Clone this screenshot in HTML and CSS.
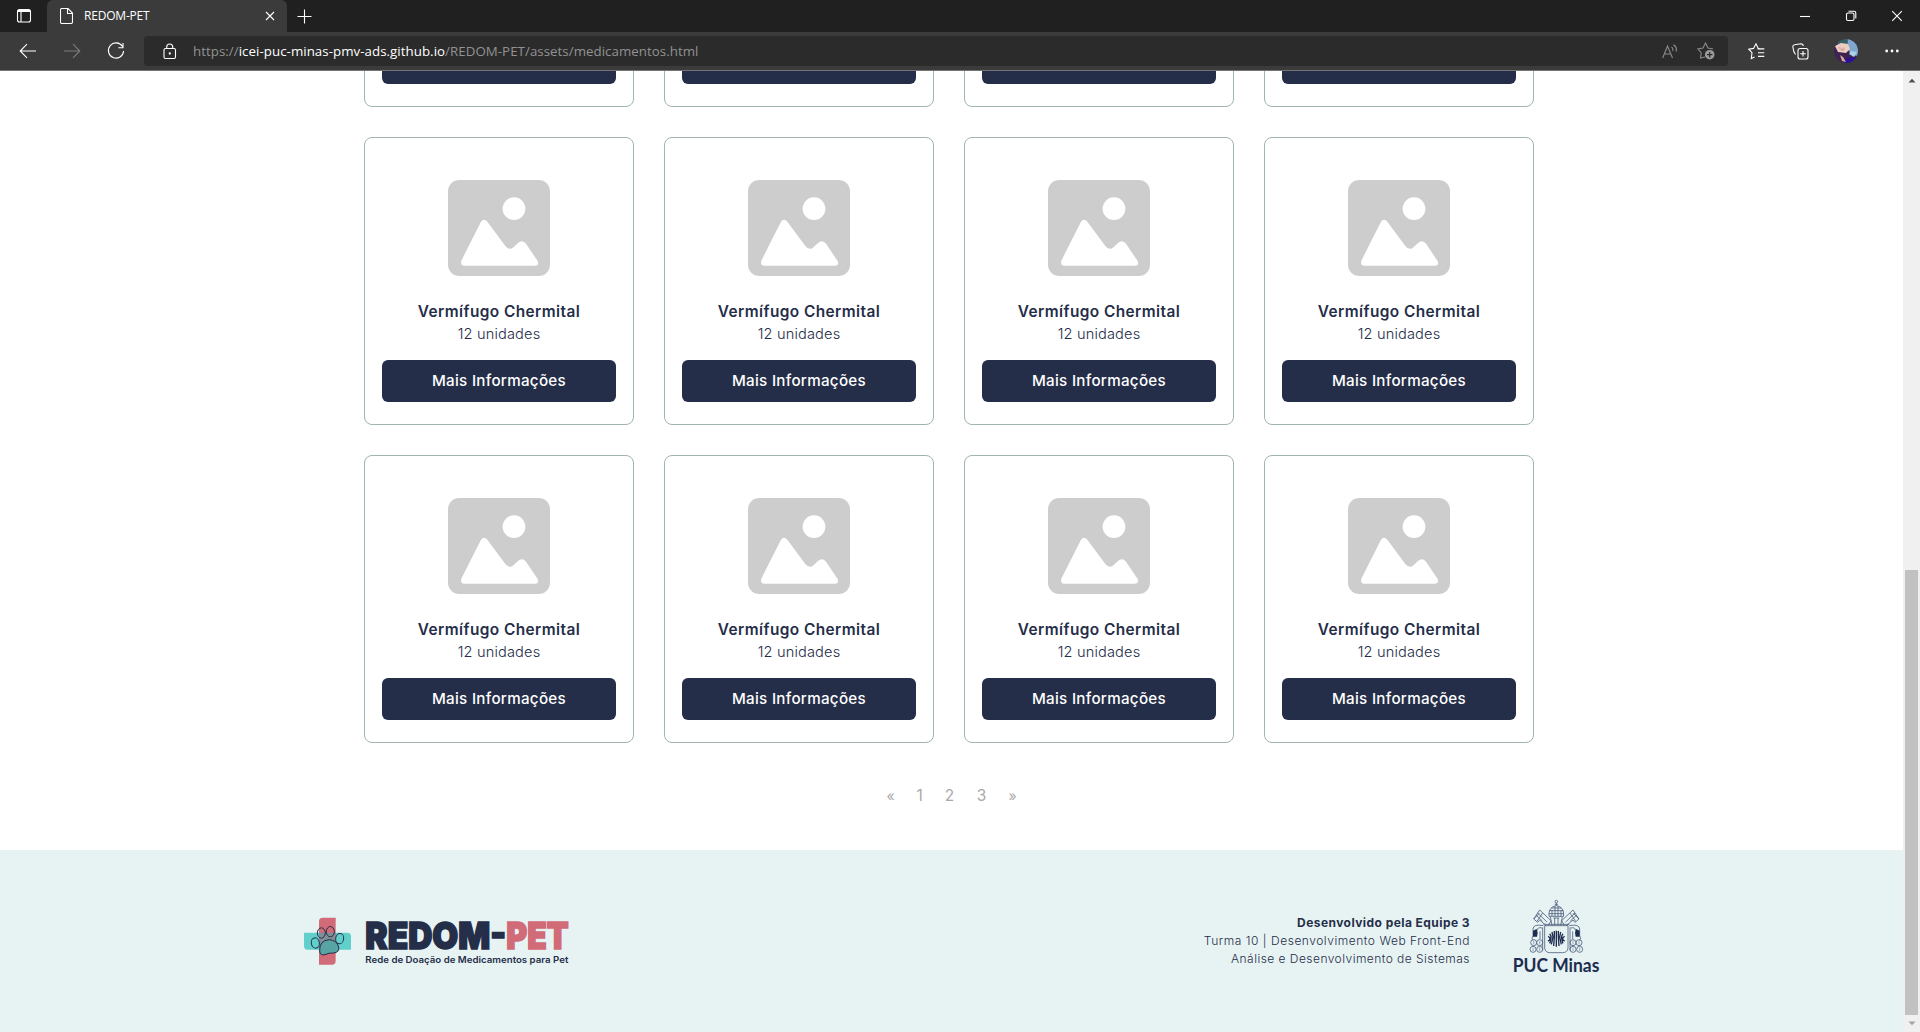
FILE: index.html
```html
<!DOCTYPE html>
<html lang="pt-BR">
<head>
<meta charset="utf-8">
<title>REDOM-PET</title>
<link rel="stylesheet" href="styles.css">
</head>
<body>
<svg class="defs" aria-hidden="true">
  <symbol id="placeholder" viewBox="0 0 306 288">
    <rect width="306" height="288" rx="34" fill="#cdcdcd"/>
    <circle cx="198" cy="86" r="34" fill="#fff"/>
    <path d="M99 125Q108 113 118 125L172 198Q185 214 198 200L211 188Q222 178 233 190L269 243Q274 257 260 257H50Q36 257 40 242Z" fill="#fff"/>
  </symbol>
</svg>

<header class="browser">
  <div class="tabs">
    <svg class="tab-menu" viewBox="0 0 16 16"><rect x="1.5" y="1.5" width="13" height="12.5" rx="2"/><path d="M2 3.5h12M2 2.5h12M5 4v10"/></svg>
    <div class="tab">
      <svg class="doc" viewBox="0 0 13 16"><path d="M2 .5h6l4.500 4.500v9q0 1.500-1.500 1.500H2Q.5 15.500.5 14V2Q.5.5 2 .5ZM7.500.5V5.500h5"/></svg>
      <span class="tab-title">REDOM-PET</span>
      <svg class="tab-close" viewBox="0 0 10 10"><path d="M1 1l8 8M9 1L1 9"/></svg>
    </div>
    <svg class="new-tab" viewBox="0 0 15 15"><path d="M7.500.5v14M.5 7.500h14"/></svg>
    <div class="window-buttons">
      <svg viewBox="0 0 12 12"><path d="M1 6.500h10"/></svg>
      <svg viewBox="0 0 12 12"><rect x="1.500" y="3" width="7.500" height="7.500" rx="1.500"/><path d="M3.500 1.200H9q1.800 0 1.800 1.800v5.500"/></svg>
      <svg viewBox="0 0 12 12"><path d="M1.200 1.200l9.600 9.600M10.800 1.200L1.200 10.800"/></svg>
    </div>
  </div>
  <div class="toolbar">
    <svg class="back" viewBox="0 0 18 16"><path d="M17 8H1.500M8 1.200L1.200 8 8 14.800"/></svg>
    <svg class="forward" viewBox="0 0 18 16"><path d="M1 8h15.500M10 1.200L16.800 8 10 14.800"/></svg>
    <svg class="reload" viewBox="0 0 18 18"><path d="M15.500 4.500A7.600 7.600 0 1 0 16.600 9M16 1v4.700h-4.700"/></svg>
    <div class="address">
      <svg class="lock" viewBox="0 0 14 17"><rect x="1" y="5.500" width="11.500" height="10" rx="1.500"/><path d="M3.700 5.500V4a3 3 0 0 1 6 0v1.500"/><circle cx="6.800" cy="10.500" r=".6"/></svg>
      <p class="url"><span class="scheme">https://</span><span class="host">icei-puc-minas-pmv-ads.github.io</span><span class="path">/REDOM-PET/assets/medicamentos.html</span></p>
      <svg class="read" viewBox="0 0 16 15"><path d="M.7 14L5.500 2l5 12M2.200 10h6.600M9.500 3q2 1.500 1.200 4M11.500.7q4 2.500 2.600 7"/></svg>
      <svg class="add-star" viewBox="0 0 18 18"><path d="M8 15L3.500 16l.7-5.300L1 7l5-.9L8.500 1 11 6l5 1"/><circle class="disc" cx="12.700" cy="12.700" r="4.800"/><path class="plus" d="M12.700 10v5.400M10 12.700h5.400"/></svg>
    </div>
    <svg class="favorites" viewBox="0 0 17 17"><path d="M12 5.700L10.300 5.400 8 .8 5.500 5.400.8 6.200 4 9.700l-.7 5.800L6.500 14M9.500 5.900h6.800M10 9.700h6.300M10 13.400h6.300"/></svg>
    <svg class="collections" viewBox="0 0 17 17"><rect x="6" y="5.500" width="10" height="10.500" rx="2"/><path d="M11 8v5.500M8.200 10.700h5.600M3.500 11.500Q1.500 9 .8 4 .7 2 2.500 1.700L9 .7q2 0 2.300 2.300"/></svg>
    <svg class="avatar" viewBox="0 0 24 24">
      <clipPath id="face"><circle cx="12" cy="12" r="12"/></clipPath>
      <g clip-path="url(#face)">
        <rect width="24" height="24" fill="#3e2350"/>
        <path d="M13 0h11v17l-7-1-3-6Z" fill="#7fa7cd"/>
        <path d="M3 0h11l-1 5-9 3Z" fill="#376062"/>
        <path d="M1 7l6-3 7 1 2 5-4 4-8-1Z" fill="#edcfc2"/>
        <path d="M4 9l2-2 1 3 3-2 1 3-3 1Z" fill="#dcaaa6"/>
        <path d="M11 20l7-2 5 1-4 5h-8Z" fill="#2b1299"/>
        <path d="M6 16l3 2 3 5-4-1Z" fill="#d6a7a0"/>
        <path d="M17 12l6 1-3 5-5-3Z" fill="#a6d3e8"/>
      </g>
    </svg>
    <svg class="more" viewBox="0 0 14 4"><circle cx="1.700" cy="2" r="1.400"/><circle cx="7" cy="2" r="1.400"/><circle cx="12.300" cy="2" r="1.400"/></svg>
  </div>
</header>

<div class="viewport">
  <div class="page">
    <main class="cards">
      <article class="card"><a class="button">Mais Informações</a></article>
      <article class="card"><a class="button">Mais Informações</a></article>
      <article class="card"><a class="button">Mais Informações</a></article>
      <article class="card"><a class="button">Mais Informações</a></article>
      <article class="card"><svg class="photo"><use href="#placeholder"/></svg><h2>Vermífugo Chermital</h2><p>12 unidades</p><a class="button">Mais Informações</a></article>
      <article class="card"><svg class="photo"><use href="#placeholder"/></svg><h2>Vermífugo Chermital</h2><p>12 unidades</p><a class="button">Mais Informações</a></article>
      <article class="card"><svg class="photo"><use href="#placeholder"/></svg><h2>Vermífugo Chermital</h2><p>12 unidades</p><a class="button">Mais Informações</a></article>
      <article class="card"><svg class="photo"><use href="#placeholder"/></svg><h2>Vermífugo Chermital</h2><p>12 unidades</p><a class="button">Mais Informações</a></article>
      <article class="card"><svg class="photo"><use href="#placeholder"/></svg><h2>Vermífugo Chermital</h2><p>12 unidades</p><a class="button">Mais Informações</a></article>
      <article class="card"><svg class="photo"><use href="#placeholder"/></svg><h2>Vermífugo Chermital</h2><p>12 unidades</p><a class="button">Mais Informações</a></article>
      <article class="card"><svg class="photo"><use href="#placeholder"/></svg><h2>Vermífugo Chermital</h2><p>12 unidades</p><a class="button">Mais Informações</a></article>
      <article class="card"><svg class="photo"><use href="#placeholder"/></svg><h2>Vermífugo Chermital</h2><p>12 unidades</p><a class="button">Mais Informações</a></article>
    </main>
    <nav class="pagination"><a class="arrow">«</a><a class="one">1</a><a>2</a><a>3</a><a class="arrow">»</a></nav>
    <footer class="footer">
      <svg class="logo" viewBox="42 79 810 150">
        <path d="M42 129H172Q183 129 183 140V180H53Q42 180 42 169Z" fill="#62d0ca"/>
        <path d="M98 84H137V214Q137 225 126 225H87V95Q87 84 98 84Z" fill="#d16b78"/>
        <path d="M87 129h50v51H87Z" fill="#7f8f97"/>
        <path d="M90 170Q92 151 118 150 141 152 146 172 149 188 131 190 116 189 105 195 90 199 89 185Z" fill="#58a3a4"/>
        <g fill="none" stroke="#252e49" stroke-width="3">
          <ellipse cx="76" cy="160" rx="12" ry="15.500" transform="rotate(-12 76 160)"/>
          <ellipse cx="94" cy="130" rx="12" ry="15.500"/>
          <ellipse cx="121" cy="126" rx="12" ry="15.500"/>
          <ellipse cx="149" cy="147" rx="12" ry="15.500" transform="rotate(8 149 147)"/>
          <path d="M89 184Q88 152 118 150 141 152 146 172 149 188 131 190 116 189 105 195 90 199 89 184Z"/>
        </g>
        <g class="wordmark">
          <text x="226" y="178" textLength="422" lengthAdjust="spacingAndGlyphs" fill="#252e49" stroke="#252e49">REDOM-</text>
          <text x="649" y="178" textLength="187" lengthAdjust="spacingAndGlyphs" fill="#d16b78" stroke="#d16b78">PET</text>
        </g>
        <text class="tagline" x="226" y="219" textLength="609" lengthAdjust="spacingAndGlyphs">Rede de Doação de Medicamentos para Pet</text>
      </svg>
      <div class="credits"><strong>Desenvolvido pela Equipe 3</strong><span class="class">Turma 10 | Desenvolvimento Web Front-End</span><span class="course">Análise e Desenvolvimento de Sistemas</span></div>
      <svg class="puc" viewBox="30 18 279 270">
        <g fill="none" stroke="#4a5b7a" stroke-width="2.400">
          <circle cx="169" cy="35" r="4"/><path d="M169 39v8M164 43h10"/>
          <path d="M147 79Q145 50 169 47 193 50 191 79ZM146 71h46M148 62h42M154 54h30M156 79V60M165 79V49M174 79V49M183 79V60"/>
          <path d="M151 80l5 26M187 80l-5 26M160 84h18M164 84v22M174 84v22"/>
          <path d="M119 60l34 32-8 14M119 60l-6 9-12 18 12 10 6-7 20 17M113 69l28 27M109 76l18 17M128 69l-17 25M101 87l17-17"/>
          <path d="M219 60l-34 32 8 14M219 60l6 9 12 18-12 10-6-7-20 17M225 69l-28 27M229 76l-18 17M210 69l17 25M237 87l-17-17"/>
          <path d="M134 107H204V174Q203 188 187 188H151Q135 188 134 174Z"/><path d="M130 103H208"/>
          <path d="M130 107q-30-6-31 10v19q-6 10 0 15M126 114q-14-4-15 8M120 124v23M128 112v70M208 107q30-6 31 10v19q6 10 0 15M212 114q14-4 15 8M218 124v23M210 112v70"/>
          <circle cx="101" cy="158" r="9"/><circle cx="119" cy="158" r="9"/><circle cx="99" cy="178" r="9"/><circle cx="119" cy="178" r="9"/>
          <circle cx="237" cy="158" r="9"/><circle cx="219" cy="158" r="9"/><circle cx="239" cy="178" r="9"/><circle cx="219" cy="178" r="9"/>
          <path d="M101 153v10M119 153v10M99 173v10M119 173v10M237 153v10M219 153v10M239 173v10M219 173v10" stroke-width="1.500"/>
        </g>
        <path d="M99 122l11-5 3 11-2 12H99ZM239 122l-11-5-3 11 2 12h12Z" fill="#1d2c50"/>
        <g fill="none" stroke="#1d2c50" stroke-width="4">
          <path d="M169 122v48M163 123v17l-2 28M175 123v17l2 28M156 126l3 15-5 22M182 126l-3 15 5 22"/>
          <path d="M149 131q5 5 4 14-1 9-4 15M189 131q-5 5-4 14 1 9 4 15M144 139q6 2 6 7 0 5-6 7M194 139q-6 2-6 7 0 5 6 7"/>
        </g>
        <text x="38" y="246" textLength="260" lengthAdjust="spacingAndGlyphs">PUC Minas</text>
      </svg>
    </footer>
  </div>
  <div class="scrollbar">
    <svg viewBox="0 0 8 5"><path d="M.5 4.500L4 .7l3.500 3.800Z" fill="#505050"/></svg>
    <div class="thumb"></div>
    <svg viewBox="0 0 8 5"><path d="M.5.5L4 4.300 7.500.5Z" fill="#a3a3a3"/></svg>
  </div>
</div>
</body>
</html>
```

FILE: styles.css
```css
* { box-sizing: border-box; }
body {
  margin: 0;
  height: 1032px;
  display: flex;
  flex-direction: column;
  overflow: hidden;
  background: #fff;
  font-family: Inter, "Open Sans", sans-serif;
}
svg { display: block; flex: none; }
.defs { width: 0; height: 0; position: absolute; }
h2, p { margin: 0; }

/* Browser frame */
.browser { height: 71px; flex: none; border-bottom: 1px solid #747474; background: #3b3b3b; }
.browser svg { fill: none; stroke: #fff; stroke-width: 1.1; }
.tabs { height: 32px; display: flex; align-items: center; background: #202020; }
.tab-menu { width: 16px; height: 16px; margin: 0 15px 0 16px; }
.tab {
  width: 240px; height: 32px; padding: 0 12px 0 13px;
  display: flex; align-items: center;
  background: #3b3b3b; border-radius: 6px 6px 0 0;
}
.doc { width: 13px; height: 16px; }
.tab-title { margin-left: 11px; flex: 1; color: #fff; font: 12px/16px "Open Sans", sans-serif; letter-spacing: -.2px; }
.tab-close { width: 10px; height: 10px; }
.new-tab { width: 15px; height: 15px; margin-left: 10px; }
.window-buttons { margin-left: auto; margin-right: 17px; display: flex; gap: 34px; }
.window-buttons svg { width: 12px; height: 12px; }
.toolbar { height: 38px; display: flex; align-items: center; }
.back { width: 18px; height: 16px; margin-left: 19px; }
.forward { width: 18px; height: 16px; margin-left: 26px; }
.toolbar .forward { stroke: #7c7c7c; }
.reload { width: 18px; height: 18px; margin-left: 26px; }
.address {
  width: 1584px; height: 30px; margin-left: 19px; padding: 0 13px 0 19px;
  display: flex; align-items: center;
  background: #2b2b2b; border-radius: 4px;
}
.lock { width: 14px; height: 17px; }
.url { margin-left: 16px; flex: 1; font: 13.3px/20px "Open Sans", sans-serif; letter-spacing: .045px; color: #929292; white-space: nowrap; }
.host { color: #fff; }
.address .read, .address .add-star { stroke: #8a8a8a; }
.read { width: 16px; height: 15px; margin-right: 19px; }
.add-star { width: 18px; height: 18px; }
.browser .disc { fill: #9a9a9a; stroke: none; }
.browser .plus { stroke: #2b2b2b; stroke-width: 1.2; }
.favorites { width: 17px; height: 17px; margin-left: 20px; }
.collections { width: 17px; height: 17px; margin-left: 27px; }
.browser .avatar { width: 24px; height: 24px; margin-left: 25px; stroke: none; }
.browser .more { width: 14px; height: 4px; margin-left: 27px; fill: #fff; stroke: none; }

/* Scrolled page */
.viewport { flex: 1; min-height: 0; display: flex; overflow: hidden; }
.page { width: 1903px; display: flex; flex-direction: column; justify-content: flex-end; overflow: hidden; }
.cards {
  flex: none; padding: 0 369px 0 364px;
  display: grid; grid-template-columns: repeat(4, 270px); grid-auto-rows: 288px; gap: 30px;
}
.card {
  padding: 42px 17px 22px;
  display: flex; flex-direction: column; align-items: center;
  border: 1px solid #a0b4b2; border-radius: 8px;
  color: #252e49;
}
.photo { width: 102px; height: 96px; margin-bottom: 25px; }
.card h2 { font-size: 15.4px; font-weight: 600; line-height: 22px; letter-spacing: .43px; white-space: nowrap; }
.card p { font-size: 14.6px; font-weight: 300; line-height: 22px; letter-spacing: .15px; }
.button {
  width: 234px; height: 42px; margin-top: auto; padding-bottom: 2px;
  display: flex; align-items: center; justify-content: center;
  background: #252e49; border-radius: 6px;
  color: #fff; font-size: 15.2px; font-weight: 500; letter-spacing: .28px;
}
.pagination {
  height: 107px; flex: none; padding-top: 42px;
  display: flex; justify-content: center; gap: 22px;
  color: #a9a9a9; font-size: 15.4px; line-height: 22px;
}
.pagination a { width: 10px; display: flex; justify-content: center; }
.pagination .one { width: 6px; }
.pagination .arrow { width: 8px; font-size: 14px; }

.footer {
  height: 182px; flex: none; padding: 0 300px 0 304px;
  display: flex; align-items: center;
  background: #e7f3f3; color: #252e49;
}
.logo { width: 270px; height: 50px; }
.wordmark { font: 900 112px Inter, sans-serif; stroke-width: 5; }
.tagline { font: 600 27px Inter, sans-serif; fill: #252e49; }
.credits {
  margin-left: auto; margin-right: 40px;
  display: flex; flex-direction: column; align-items: flex-end;
  font-size: 12px; font-weight: 300; line-height: 18px;
}
.credits strong { font-weight: 700; letter-spacing: .44px; }
.class { letter-spacing: .53px; }
.course { letter-spacing: .46px; }
.puc { width: 93px; height: 90px; }
.puc text { font: bold 54px Lato, sans-serif; fill: #1d2c50; }

.scrollbar {
  width: 17px; padding: 7px 2px 6px;
  display: flex; flex-direction: column; align-items: center;
  background: #f0f0f0;
}
.scrollbar svg { width: 8px; height: 5px; }
.thumb { width: 13px; height: 445px; margin: auto 0 6px; background: #c1c1c1; }
```
